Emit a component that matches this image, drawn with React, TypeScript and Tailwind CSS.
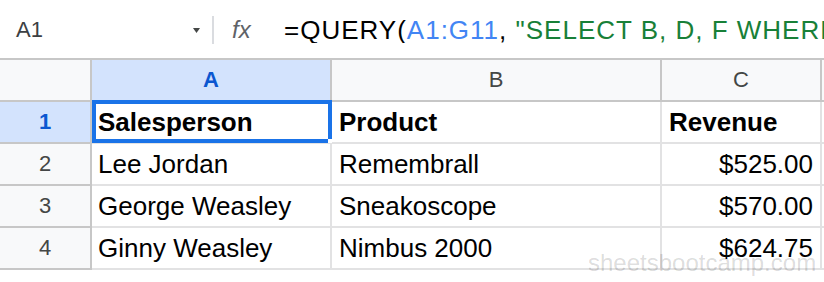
import React from 'react'

const rows = [
  { n: 2, name: 'Lee Jordan', product: 'Remembrall', revenue: '$525.00' },
  { n: 3, name: 'George Weasley', product: 'Sneakoscope', revenue: '$570.00' },
  { n: 4, name: 'Ginny Weasley', product: 'Nimbus 2000', revenue: '$624.75' },
]

function FormulaBar() {
  return (
    <div className="flex h-[58px] items-center bg-white pt-[2px]">
      {/* name box */}
      <div className="flex w-[212px] items-center pl-[16px] pr-[12px]">
        <span className="text-[22px] leading-none text-[#3c4043]">A1</span>
        <svg className="ml-auto" width="7" height="5" viewBox="0 0 7 5">
          <path d="M0 0h7L3.5 5z" fill="#444746" />
        </svg>
      </div>
      <div className="h-[28px] w-[2px] bg-[#dadce0]" />
      <span className="ml-[18px] w-[52px] text-[24px] italic leading-none text-[#5f6368]">fx</span>
      <div className="flex-1 overflow-hidden whitespace-nowrap text-[26px] leading-none tracking-[1px]">
        <span className="text-black">=QUERY(</span>
        <span className="text-[#4285f4]">A1:G11</span>
        <span className="text-black">, </span>
        <span className="text-[#188038]">"SELECT B, D, F WHERE C = 'Q1'")</span>
      </div>
    </div>
  )
}

function HeaderRow() {
  return (
    <div className="flex h-[44px] border-y-2 border-y-[#c7c7c7] bg-[#f8f9fa] text-[22px] leading-none">
      <div className="w-[92px] shrink-0 border-r-2 border-r-[#c7c7c7]" />
      <div className="flex w-[240px] shrink-0 items-center justify-center border-r-2 border-r-[#c7c7c7] bg-[#d3e3fd] font-bold text-[#0b57d0]">
        A
      </div>
      <div className="flex w-[330px] shrink-0 items-center justify-center border-r-2 border-r-[#c7c7c7] text-[#444746]">
        B
      </div>
      <div className="flex w-[160px] shrink-0 items-center justify-center border-r-2 border-r-[#c7c7c7] text-[#444746]">
        C
      </div>
      <div className="w-[120px] shrink-0" />
    </div>
  )
}

function RowNum({ n, active }: { n: number; active?: boolean }) {
  return (
    <div
      className={
        active
          ? 'flex w-[92px] shrink-0 items-center justify-center border-b-2 border-r-2 border-b-[#c7c7c7] border-r-[#c7c7c7] bg-[#d3e3fd] text-[22px] font-bold text-[#0b57d0]'
          : 'flex w-[92px] shrink-0 items-center justify-center border-b-2 border-r-2 border-b-[#c7c7c7] border-r-[#c7c7c7] bg-[#f8f9fa] text-[22px] text-[#444746]'
      }
    >
      {n}
    </div>
  )
}

export default function App() {
  return (
    <div className="relative h-[282px] w-[824px] overflow-hidden bg-white font-['Liberation_Sans',Arial,sans-serif]">
      <FormulaBar />
      <HeaderRow />

      {/* row 1 - header row of the data */}
      <div className="flex h-[42px] text-[26px] leading-none text-black">
        <RowNum n={1} active />
        <div className="relative flex w-[240px] shrink-0 items-center border-b-2 border-r-2 border-[#e2e2e3] pl-[6px] font-bold">
          Salesperson
          <div className="absolute -top-[2px] -bottom-[1px] left-0 -right-[2px] border-[4px] border-[#1a73e8]" />
          <div className="absolute -bottom-[1px] -right-[2px] h-[4px] w-[4px] bg-white" />
        </div>
        <div className="flex w-[330px] shrink-0 items-center border-b-2 border-r-2 border-[#e2e2e3] pl-[7px] font-bold">
          Product
        </div>
        <div className="flex w-[160px] shrink-0 items-center border-b-2 border-r-2 border-[#e2e2e3] pl-[7px] font-bold">
          Revenue
        </div>
        <div className="w-[120px] shrink-0 border-b-2 border-[#e2e2e3]" />
      </div>

      {rows.map((r) => (
        <div key={r.n} className="flex h-[42px] text-[26px] leading-none text-black">
          <RowNum n={r.n} />
          <div className="flex w-[240px] shrink-0 items-center whitespace-nowrap border-b-2 border-r-2 border-[#e2e2e3] pl-[6px]">
            {r.name}
          </div>
          <div className="flex w-[330px] shrink-0 items-center whitespace-nowrap border-b-2 border-r-2 border-[#e2e2e3] pl-[7px]">
            {r.product}
          </div>
          <div className="flex w-[160px] shrink-0 items-center justify-end border-b-2 border-r-2 border-[#e2e2e3] pr-[7px]">
            {r.revenue}
          </div>
          <div className="w-[120px] shrink-0 border-b-2 border-[#e2e2e3]" />
        </div>
      ))}

      {/* watermark */}
      <div className="pointer-events-none absolute left-[588px] top-[251px] text-[24px] leading-[24px] text-black/15">
        sheetsbootcamp.com
      </div>
    </div>
  )
}
